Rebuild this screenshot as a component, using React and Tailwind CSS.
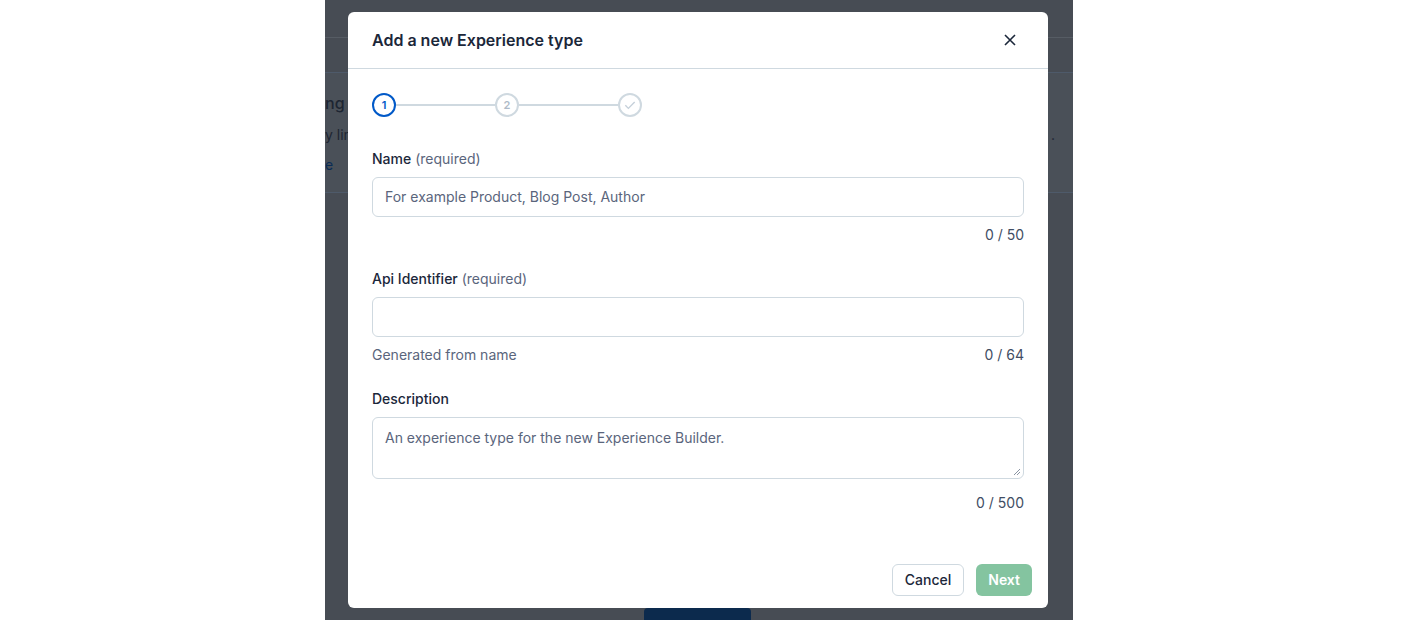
import React from 'react';

const Counter = ({ left, right, extra = '' }) => (
  <div className={`flex justify-between mt-2 text-sm leading-5 ${extra}`}>
    <span className="text-[#5a657c]">{left}</span>
    <span className="text-[#414d63]">{right}</span>
  </div>
);

const Stepper = () => (
  <div className="flex items-center">
    <div className="w-6 h-6 rounded-full border-2 border-[#0059c8] text-[#0059c8] text-[11px] font-semibold flex items-center justify-center">1</div>
    <div className="w-[99px] h-[2px] bg-[#cfd9e0]" />
    <div className="w-6 h-6 rounded-full border-2 border-[#cfd9e0] text-[#aebac8] text-[11px] font-semibold flex items-center justify-center">2</div>
    <div className="w-[99px] h-[2px] bg-[#cfd9e0]" />
    <div className="w-6 h-6 rounded-full border-2 border-[#cfd9e0] flex items-center justify-center">
      <svg width="14" height="14" viewBox="0 0 12 12" fill="none" stroke="#c5d0da" strokeWidth="1.2">
        <path d="M2 6.3l2.6 2.6L10 3.5" />
      </svg>
    </div>
  </div>
);

export default function App() {
  return (
    <div className="w-[1413px] h-[620px] bg-white flex overflow-hidden font-[Inter,sans-serif]">
      <div className="ml-[325px] w-[748px] h-full bg-[#474c54] relative flex flex-col">
        <div className="h-[38px] border-b border-[#565c64]" />
        <div className="mt-[34px] h-[121px] bg-[#4a5058] border-y border-[#4e5a6a] text-[#1d2532] text-base">
          <div className="pt-[18px] text-[16px] font-medium">ng</div>
          <div className="pt-[10px] text-sm flex justify-between pr-[18px]"><span>y lin</span><span>.</span></div>
          <div className="pt-[10px] text-sm text-[#0b2c55]">e</div>
        </div>
        <div className="mt-auto ml-[319px] w-[107px] h-[12px] bg-[#0c2a4d] rounded-t-sm" />

        <div className="absolute left-[23px] top-[12px] w-[700px] h-[596px] bg-white rounded-md flex flex-col">
          <div className="h-[57px] border-b border-[#cfd9e0] flex items-center justify-between px-6">
            <h2 className="text-base font-semibold text-[#1b273a]">Add a new Experience type</h2>
            <svg width="12" height="12" viewBox="0 0 12 12" stroke="#1b273a" strokeWidth="1.6" className="mr-[8px]">
              <path d="M1 1l10 10M11 1L1 11" />
            </svg>
          </div>
          <div className="px-6 pt-6 flex-1">
            <Stepper />
            <div className="mt-[32px]">
              <div className="text-sm leading-5 mb-2"><span className="font-medium text-[#1b273a]">Name</span> <span className="text-[#5a657c]">(required)</span></div>
              <div className="h-10 border border-[#cfd9e0] rounded-md px-3 flex items-center text-sm text-[#5a657c]">For example Product, Blog Post, Author</div>
              <Counter left="" right="0 / 50" />
            </div>
            <div className="mt-6">
              <div className="text-sm leading-5 mb-2"><span className="font-medium text-[#1b273a]">Api Identifier</span> <span className="text-[#5a657c]">(required)</span></div>
              <div className="h-10 border border-[#cfd9e0] rounded-md" />
              <Counter left="Generated from name" right="0 / 64" />
            </div>
            <div className="mt-6">
              <div className="text-sm leading-5 mb-2 font-medium text-[#1b273a]">Description</div>
              <div className="h-[62px] border border-[#cfd9e0] rounded-md px-3 pt-[10px] text-sm text-[#5a657c] relative">
                An experience type for the new Experience Builder.
                <svg width="8" height="8" viewBox="0 0 8 8" stroke="#8a94a3" className="absolute right-[2px] bottom-[2px]">
                  <path d="M7 1L1 7M7 4L4 7" />
                </svg>
              </div>
              <Counter left="" right="0 / 500" extra="!mt-[14px]" />
            </div>
          </div>
          <div className="flex justify-end gap-3 px-4 pb-3">
            <button className="h-8 px-3 border border-[#cfd9e0] rounded-md text-sm font-medium text-[#1b273a] bg-white">Cancel</button>
            <button className="h-8 px-3 rounded-md text-sm font-semibold text-white bg-[#84c4a0]">Next</button>
          </div>
        </div>
      </div>
    </div>
  );
}
